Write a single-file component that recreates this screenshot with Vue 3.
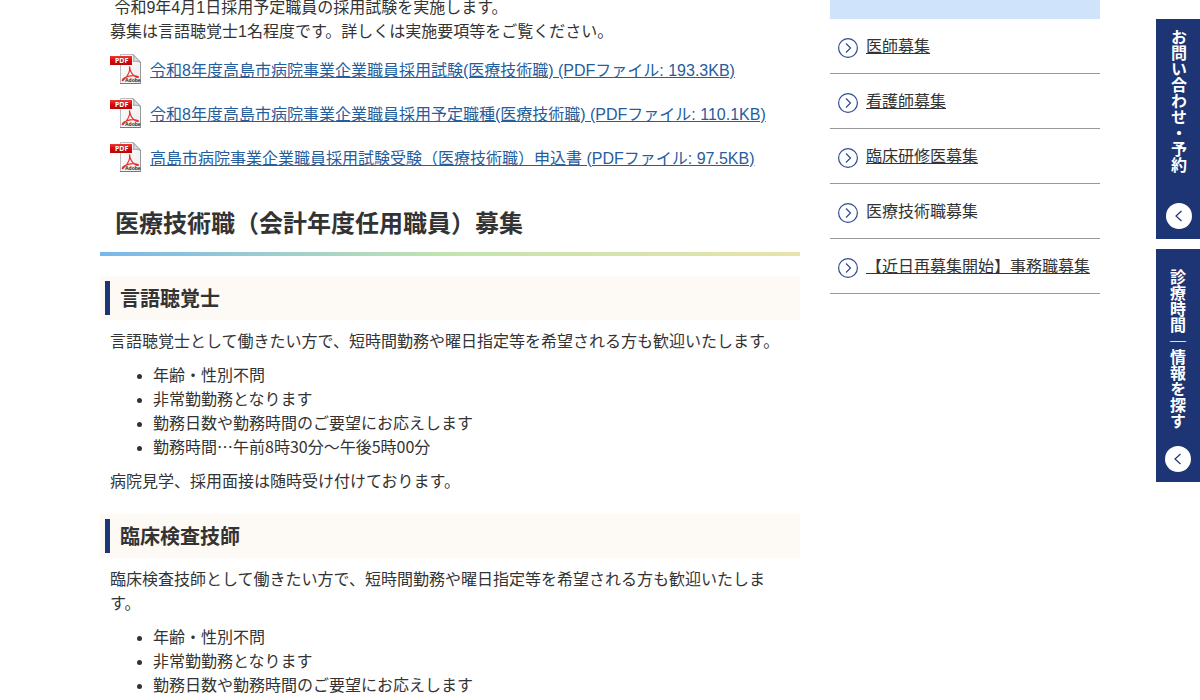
<script setup>
const files = [
  '令和8年度高島市病院事業企業職員採用試験(医療技術職) (PDFファイル: 193.3KB)',
  '令和8年度高島市病院事業企業職員採用予定職種(医療技術職) (PDFファイル: 110.1KB)',
  '高島市病院事業企業職員採用試験受験（医療技術職）申込書 (PDFファイル: 97.5KB)',
]
const jobs = [
  {
    title: '言語聴覚士',
    lead: '言語聴覚士として働きたい方で、短時間勤務や曜日指定等を希望される方も歓迎いたします。',
    points: ['年齢・性別不問', '非常勤勤務となります', '勤務日数や勤務時間のご要望にお応えします', '勤務時間…午前8時30分～午後5時00分'],
    note: '病院見学、採用面接は随時受け付けております。',
  },
  {
    title: '臨床検査技師',
    lead: '臨床検査技師として働きたい方で、短時間勤務や曜日指定等を希望される方も歓迎いたします。',
    points: ['年齢・性別不問', '非常勤勤務となります', '勤務日数や勤務時間のご要望にお応えします'],
  },
]
const menu = [
  { label: '医師募集' },
  { label: '看護師募集' },
  { label: '臨床研修医募集' },
  { label: '医療技術職募集', current: true },
  { label: '【近日再募集開始】事務職募集' },
]
</script>

<template>
  <div class="page">
    <main class="main">
      <p class="intro">&nbsp;令和9年4月1日採用予定職員の採用試験を実施します。<br />募集は言語聴覚士1名程度です。詳しくは実施要項等をご覧ください。</p>
      <div class="files">
        <div v-for="file in files" :key="file" class="file">
          <svg class="pdf" viewBox="0 0 32 32" aria-hidden="true">
            <defs>
              <linearGradient id="pdf-red" x1="0" y1="0" x2="0" y2="1">
                <stop offset="0" stop-color="#ee3a38" />
                <stop offset="0.5" stop-color="#d3090c" />
                <stop offset="1" stop-color="#b90508" />
              </linearGradient>
              <linearGradient id="pdf-paper" x1="0" y1="0" x2="1" y2="1">
                <stop offset="0" stop-color="#ffffff" />
                <stop offset="1" stop-color="#ececec" />
              </linearGradient>
            </defs>
            <path d="M10.5 .5H23L30.500 8V29.500H10.500Z" fill="url(#pdf-paper)" stroke="#bdbdbd" />
            <path d="M10 29.500H31" stroke="#777" />
            <path d="M30.500 8V29.500" stroke="#999" />
            <path d="M23 .5C24 3 24 5 23.500 7.500C26 7 28 7.200 30.500 8.500Z" fill="#ddd" stroke="#8e8e8e" stroke-width=".8" />
            <path d="M19.500 12.500C20.500 17 18 22 13 26.500C11.500 27.500 12 25 15 23.500C19 21.500 24 21 28 22.500C29.500 23.500 27 24 25 22.500C21.500 20 20 17 19.500 12.500Z" fill="none" stroke="#ee2b2b" stroke-width="1.2" />
            <rect x="0" y="2" width="22" height="9" fill="url(#pdf-red)" />
            <text x="5" y="9" class="pdf-tag">PDF</text>
            <text x="15" y="28" class="pdf-brand">Adobe</text>
          </svg>
          <a href="#">{{ file }}</a>
        </div>
      </div>

      <h2>医療技術職（会計年度任用職員）募集</h2>

      <section v-for="job in jobs" :key="job.title">
        <h3>{{ job.title }}</h3>
        <p>{{ job.lead }}</p>
        <ul class="points">
          <li v-for="point in job.points" :key="point"><span>{{ point }}</span></li>
        </ul>
        <p v-if="job.note">{{ job.note }}</p>
      </section>
    </main>

    <aside class="side">
      <div class="side-head"></div>
      <ul class="menu">
        <li v-for="item in menu" :key="item.label">
          <svg viewBox="0 0 20 20" aria-hidden="true">
            <circle cx="10" cy="10" r="9.400" />
            <path d="M8 5.500L12.500 10L8 14.500" />
          </svg>
          <span v-if="item.current">{{ item.label }}</span>
          <a v-else href="#">{{ item.label }}</a>
        </li>
      </ul>
    </aside>

    <div class="tabs">
      <button type="button" class="tab contact">
        <span>お問い合わせ・予約</span>
        <svg viewBox="0 0 26 26" aria-hidden="true"><circle cx="13" cy="13" r="13" /><path d="M15.500 8L10 13L15.500 18" /></svg>
      </button>
      <button type="button" class="tab search">
        <span>診療時間｜情報を探す</span>
        <svg viewBox="0 0 26 26" aria-hidden="true"><circle cx="13" cy="13" r="13" /><path d="M15.500 8L10 13L15.500 18" /></svg>
      </button>
    </div>
  </div>
</template>

<style>
body {
  background: #fff;
}
</style>

<style scoped>
.page {
  display: grid;
  grid-template-columns: minmax(0, 1fr) 270px;
  gap: 30px;
  align-items: start;
  max-width: 1000px;
  margin: 0 auto;
  color: #333;
  font: 16px/24px "Liberation Sans", "Noto Sans CJK JP", sans-serif;
}
.main {
  display: flow-root;
}
p {
  margin: 10px;
}
.intro {
  margin-top: -4px;
}
.files {
  display: grid;
  gap: 12px;
  padding: 0 10px;
}
.file {
  display: flex;
  align-items: center;
  gap: 8px;
}
.file a {
  padding-top: 2px;
  color: #265d9c;
}
.pdf {
  flex: none;
  width: 32px;
  height: 32px;
}
.pdf-tag {
  fill: #fff;
  font: bold 7px "Noto Sans", sans-serif;
}
.pdf-brand {
  fill: #222;
  font: bold 5px "Liberation Sans", sans-serif;
}
h2 {
  margin: 32px 0 20px;
  padding: 0 15px 10px;
  border-bottom: 4px solid;
  border-image: linear-gradient(90deg, #78b7ec, #c3e4af 50%, #e8e3ac) 1;
  font-size: 24px;
  line-height: 36px;
}
h3 {
  display: flex;
  margin: 20px 0 10px;
  padding: 5px;
  background: #fdf9f5;
  font-family: "Noto Sans CJK JP", sans-serif;
  font-size: 20px;
  line-height: 34px;
}
h3::before {
  content: "";
  width: 5px;
  margin-right: 10px;
  background: #1c3575;
}
.points {
  margin: 10px;
  padding-left: 43px;
}
.points span {
  font-family: "Noto Sans CJK JP", sans-serif;
  line-height: 1;
}
.side-head {
  height: 19px;
  background: #cfe3fb;
}
.menu {
  margin: 0;
  padding: 0;
  list-style: none;
}
.menu li {
  display: flex;
  align-items: flex-start;
  gap: 8px;
  padding: 16px 8px 14px;
  border-bottom: 1px solid #999;
}
.menu a {
  color: inherit;
}
.menu svg {
  flex: none;
  width: 20px;
  height: 20px;
  margin-top: 3px;
  fill: none;
  stroke: #2f4b8f;
  stroke-width: 1.2;
}
.tabs {
  position: fixed;
  top: 19px;
  right: 0;
  display: grid;
  gap: 10px;
}
.tab {
  display: flex;
  flex-direction: column;
  align-items: center;
  width: 44px;
  border: 0;
  background: #1d3574;
  color: #fff;
  font: bold 16px/24px "Noto Sans CJK JP", sans-serif;
  cursor: pointer;
}
.tab span {
  writing-mode: vertical-rl;
}
.tab svg {
  width: 26px;
  height: 26px;
  fill: #fff;
}
.tab path {
  fill: none;
  stroke: #1d3574;
  stroke-width: 1.2;
}
.contact {
  gap: 30px;
  padding: 10px 0 10px 2px;
}
.search {
  gap: 17px;
  padding: 20px 0 10px;
}
</style>
